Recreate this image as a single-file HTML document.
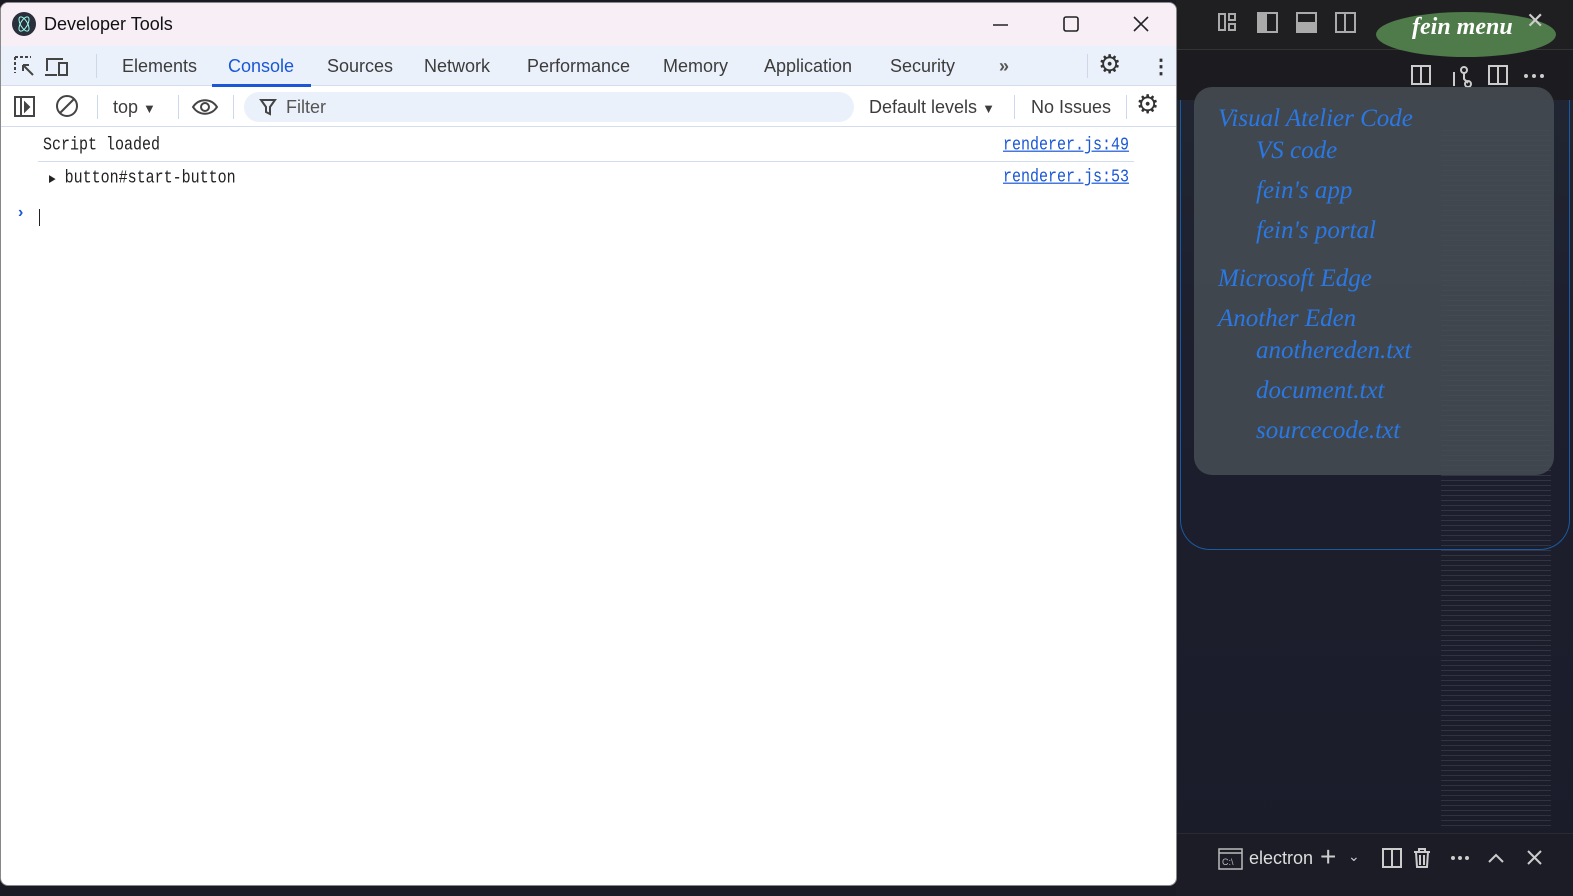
<!DOCTYPE html>
<html><head><meta charset="utf-8"><style>
*{margin:0;padding:0;box-sizing:border-box}
body{width:1573px;height:896px;overflow:hidden;background:#1a1a24;font-family:"Liberation Sans",sans-serif;position:relative}
.abs{position:absolute}
#right{left:1176px;top:0;width:397px;height:896px;background:linear-gradient(180deg,#232733 0%,#1d1f2e 40%,#1b1c2a 100%)}
#win{left:0;top:2px;width:1177px;height:884px;background:#fff;border-radius:8px;overflow:hidden;border:1px solid #888}
#title{left:0;top:0;width:100%;height:43px;background:#f7eef6}
#tabs{left:0;top:43px;width:100%;height:40px;background:#ebf1fa;border-bottom:1px solid #d3dded}
#tool{left:0;top:84px;width:100%;height:40px;background:#fff;border-bottom:1px solid #d3dded}
.t{position:absolute;font-size:18px;color:#3c3c3c;top:10px}
.mono{font-family:"Liberation Mono",monospace;font-size:15px;color:#222;transform:scaleY(1.2);transform-origin:0 0}
.link{font-family:"Liberation Mono",monospace;font-size:15px;color:#1a57d6;text-decoration:underline;position:absolute;transform:scaleY(1.2);transform-origin:0 0}
.sep{position:absolute;width:1px;background:#cdd8ea}
.cur{font-family:"Liberation Serif",serif;font-style:italic;color:#2a78e4;position:absolute;font-size:25px}
</style></head><body>
<div id="right" class="abs">
 <div class="abs" style="left:0;top:0;width:397px;height:50px;background:#1f1f22;border-bottom:1px solid #333"></div>
 <div class="abs" style="left:0;top:50px;width:397px;height:50px;background:#1c1c20"></div>
 <svg class="abs" style="left:30px;top:10px" width="150" height="26" fill="none" stroke="#aaa" stroke-width="2"><rect x="13" y="4" width="6" height="16"/><rect x="23" y="4" width="6" height="6"/><rect x="23" y="14" width="6" height="6"/><rect x="52" y="3" width="19" height="19"/><rect x="52" y="3" width="8" height="19" fill="#aaa"/><rect x="91" y="3" width="19" height="19"/><rect x="91" y="13" width="19" height="9" fill="#aaa"/><rect x="130" y="3" width="19" height="19"/><line x1="139" y1="3" x2="139" y2="22"/></svg>
 <div class="abs" style="left:200px;top:12px;width:180px;height:45px;border-radius:50%;background:#4f7a4a"></div>
 <div class="abs" style="left:236px;top:14px;font-family:'Liberation Serif',serif;font-style:italic;font-weight:bold;color:#fff;font-size:24px">fein menu</div>
 <div class="abs" style="left:350px;top:8px;color:#ccc;font-size:22px">✕</div>
 <svg class="abs" style="left:230px;top:62px" width="140" height="28" fill="none" stroke="#ccc" stroke-width="2"><rect x="6" y="4" width="18" height="18"/><line x1="15" y1="4" x2="15" y2="22"/><circle cx="58" cy="8" r="3"/><circle cx="62" cy="22" r="3"/><path d="M48 10v14M58 11v6l4 4"/><rect x="83" y="4" width="18" height="18"/><line x1="92" y1="4" x2="92" y2="22"/><circle cx="120" cy="14" r="1" fill="#ccc"/><circle cx="128" cy="14" r="1" fill="#ccc"/><circle cx="136" cy="14" r="1" fill="#ccc"/></svg>
 <div class="abs" style="left:4px;top:100px;width:390px;height:450px;border:1px solid #1a5aa0;border-top:none;border-radius:0 0 30px 30px"></div>
 <div class="abs" style="left:265px;top:130px;width:110px;height:700px;background:repeating-linear-gradient(180deg,rgba(180,190,200,.3) 0 1px,transparent 1px 5px);opacity:.45"></div>
 <div class="abs" style="left:18px;top:87px;width:360px;height:388px;border-radius:18px;background:rgba(70,78,84,.85)"></div>
 <div class="cur" style="left:42px;top:105px">Visual Atelier Code</div>
 <div class="cur" style="left:80px;top:137px">VS code</div>
 <div class="cur" style="left:80px;top:177px">fein's app</div>
 <div class="cur" style="left:80px;top:217px">fein's portal</div>
 <div class="cur" style="left:42px;top:265px">Microsoft Edge</div>
 <div class="cur" style="left:42px;top:305px">Another Eden</div>
 <div class="cur" style="left:80px;top:337px">anothereden.txt</div>
 <div class="cur" style="left:80px;top:377px">document.txt</div>
 <div class="cur" style="left:80px;top:417px">sourcecode.txt</div>
 <div class="abs" style="left:0;top:833px;width:397px;height:63px;background:#1b1c26;border-top:1px solid #2a2a33"></div>
 <svg class="abs" style="left:42px;top:847px" width="26" height="24" fill="none" stroke="#bbb" stroke-width="1.5"><rect x="1" y="2" width="23" height="20"/><line x1="1" y1="6" x2="24" y2="6"/><text x="4" y="18" font-size="9" fill="#bbb" stroke="none" font-family="Liberation Sans">C:\</text></svg>
 <div class="abs" style="left:73px;top:848px;color:#ddd;font-size:18px">electron</div>
 <div class="abs" style="left:144px;top:841px;color:#ccc;font-size:28px">+</div>
 <div class="abs" style="left:172px;top:848px;color:#ccc;font-size:14px">⌄</div>
 <svg class="abs" style="left:205px;top:846px" width="180" height="24" fill="none" stroke="#ccc" stroke-width="2"><rect x="2" y="3" width="18" height="18"/><line x1="11" y1="3" x2="11" y2="21"/><path d="M33 6h16M38 6V3h6v3M35 6l1 15h10l1-15M39 9v10M43 9v10"/><circle cx="72" cy="12" r="1"/><circle cx="79" cy="12" r="1"/><circle cx="86" cy="12" r="1"/><path d="M108 16l7-7 7 7M147 5l13 13M160 5l-13 13"/></svg>
</div>
<div id="win" class="abs">
 <div id="title" class="abs">
  <svg class="abs" style="left:11px;top:9px" width="24" height="24"><circle cx="12" cy="12" r="12" fill="#2b2e3b"/><ellipse cx="12" cy="12" rx="8" ry="3.5" fill="none" stroke="#9fe" stroke-width="1" transform="rotate(60 12 12)"/><ellipse cx="12" cy="12" rx="8" ry="3.5" fill="none" stroke="#9fe" stroke-width="1" transform="rotate(-60 12 12)"/></svg>
  <div class="abs" style="left:43px;top:11px;font-size:18px;color:#111">Developer Tools</div>
  <svg class="abs" style="left:990px;top:10px" width="170" height="24" fill="none" stroke="#222" stroke-width="1.6"><line x1="2" y1="12" x2="17" y2="12"/><rect x="73" y="4" width="14" height="14" rx="2"/><path d="M143 4l14 14M157 4l-14 14"/></svg>
 </div>
 <div id="tabs" class="abs">
  <svg class="abs" style="left:12px;top:9px" width="70" height="24" fill="none" stroke="#444" stroke-width="2"><path d="M2 2h16M2 2v16" stroke-dasharray="3 2"/><path d="M10 10l10 10M10 10h6M10 10v6"/><path d="M34 16V4h16M32 20h12M46 8h8v12h-8z"/></svg>
  <div class="sep" style="left:95px;top:8px;height:24px"></div>
  <div class="t" style="left:121px">Elements</div>
  <div class="t" style="left:227px;color:#1a57d6">Console</div>
  <div class="abs" style="left:211px;top:38px;width:99px;height:3px;background:#1a57d6"></div>
  <div class="t" style="left:326px">Sources</div>
  <div class="t" style="left:423px">Network</div>
  <div class="t" style="left:526px">Performance</div>
  <div class="t" style="left:662px">Memory</div>
  <div class="t" style="left:763px">Application</div>
  <div class="t" style="left:889px">Security</div>
  <div class="t" style="left:998px;color:#555;font-weight:bold">»</div>
  <div class="sep" style="left:1086px;top:8px;height:24px"></div>
  <div class="abs" style="left:1097px;top:3px;font-size:26px;color:#333">⚙</div>
  <div class="abs" style="left:1150px;top:8px;font-size:20px;color:#333;font-weight:bold">⋮</div>
 </div>
 <div id="tool" class="abs">
  <svg class="abs" style="left:12px;top:8px" width="70" height="24" fill="none" stroke="#444" stroke-width="2"><rect x="2" y="2" width="19" height="19"/><line x1="8" y1="2" x2="8" y2="21"/><path d="M12 8l4 4-4 4z" fill="#444"/><circle cx="54" cy="11" r="10"/><line x1="47" y1="18" x2="61" y2="4"/></svg>
  <div class="sep" style="left:96px;top:8px;height:24px"></div>
  <div class="t" style="left:112px;top:10px">top <span style="font-size:13px">▼</span></div>
  <div class="sep" style="left:177px;top:8px;height:24px"></div>
  <svg class="abs" style="left:190px;top:8px" width="28" height="24" fill="none" stroke="#444" stroke-width="2"><path d="M2 12c6-9 18-9 24 0c-6 9-18 9-24 0z"/><circle cx="14" cy="12" r="4"/></svg>
  <div class="sep" style="left:232px;top:8px;height:24px"></div>
  <div class="abs" style="left:243px;top:5px;width:610px;height:30px;border-radius:15px;background:#ebf1fa"></div>
  <svg class="abs" style="left:258px;top:11px" width="18" height="18" fill="none" stroke="#444" stroke-width="2"><path d="M2 2h14l-5 7v7l-4-2v-5z"/></svg>
  <div class="t" style="left:285px;color:#555">Filter</div>
  <div class="t" style="left:868px">Default levels <span style="font-size:13px">▼</span></div>
  <div class="sep" style="left:1013px;top:8px;height:24px"></div>
  <div class="t" style="left:1030px">No Issues</div>
  <div class="sep" style="left:1125px;top:8px;height:24px"></div>
  <div class="abs" style="left:1135px;top:2px;font-size:26px;color:#333">⚙</div>
 </div>
 <div class="abs mono" style="left:42px;top:132px">Script loaded</div>
 <div class="link" style="left:1002px;top:132px">renderer.js:49</div>
 <div class="abs" style="left:37px;top:158px;width:1096px;height:1px;background:#d3dded"></div>
 <div class="abs mono" style="left:48px;top:165px"><span style="font-size:11px">▶</span> button#start-button</div>
 <div class="link" style="left:1002px;top:164px">renderer.js:53</div>
 <div class="abs" style="left:17px;top:201px;color:#1a57d6;font-size:16px;font-weight:bold">›</div>
 <div class="abs" style="left:38px;top:206px;width:1px;height:17px;background:#222"></div>
</div>
</body></html>
